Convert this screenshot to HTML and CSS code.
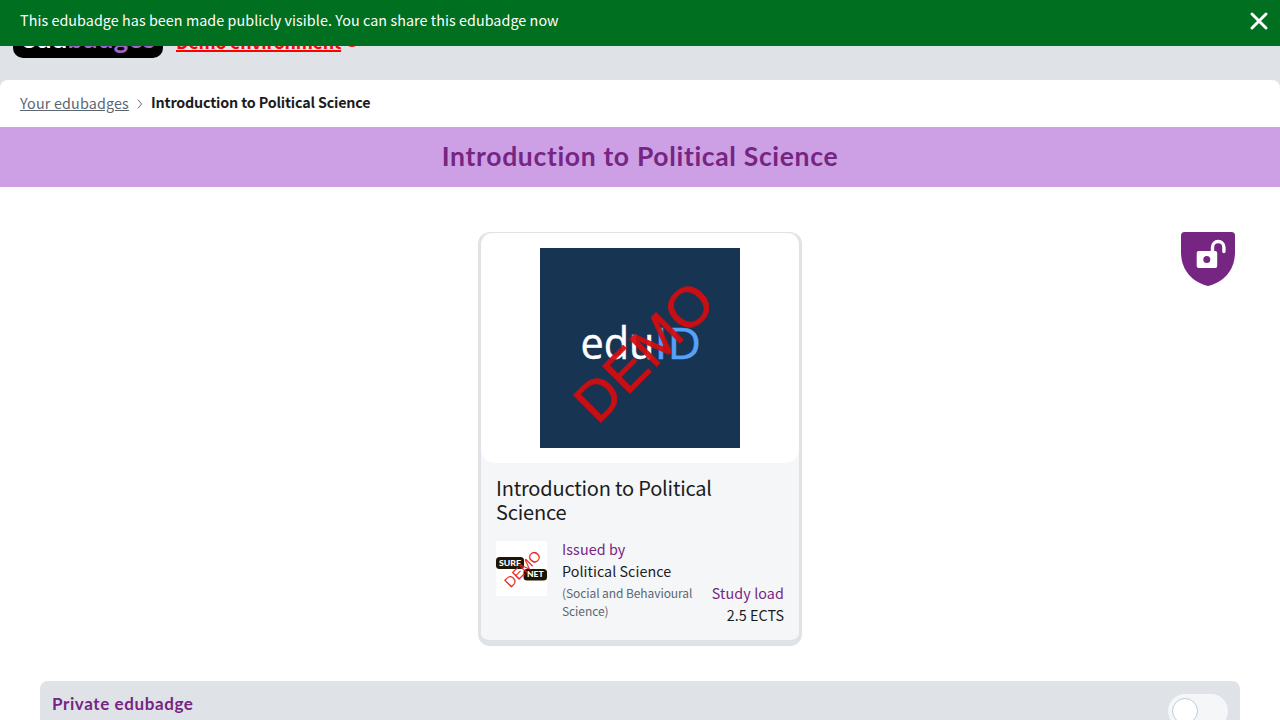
FILE: index.html
```html
<!DOCTYPE html>
<html lang="en">
<head>
<meta charset="utf-8">
<title>Introduction to Political Science</title>
<link rel="stylesheet" href="styles.css">
</head>
<body>
<div class="toast">
  <span>This edubadge has been made publicly visible. You can share this edubadge now</span>
  <svg class="close" viewBox="0 0 18 18" width="18" height="18"><path d="M2 2L16 16M16 2L2 16" fill="none" stroke="#fff" stroke-width="2.900" stroke-linecap="round"/></svg>
</div>
<header class="header">
  <div class="logo">edu<span class="logo-accent">badges</span></div>
  <a class="demo">Demo environment</a>
  <svg class="info" viewBox="0 0 14 14" width="14" height="14"><circle cx="7" cy="7" r="7" fill="#f00"/></svg>
</header>
<main class="page">
  <nav class="crumbs">
    <a class="crumb">Your edubadges</a>
    <svg class="chevron" viewBox="0 0 6 10" width="6" height="10"><path d="M1 .7L4.600 5L1 9.300" fill="none" stroke="#606a74" stroke-width="1"/></svg>
    <span class="current">Introduction to Political Science</span>
  </nav>
  <div class="band"><h1>Introduction to Political Science</h1></div>
  <section class="stage">
    <article class="card">
      <div class="picture">
        <svg viewBox="0 0 200 200" width="200" height="200">
          <rect width="200" height="200" fill="#183453"/>
          <text class="eduid" x="40.500" y="111" textLength="74" lengthAdjust="spacingAndGlyphs" fill="#fff" stroke="#fff" stroke-width=".4">edu</text>
          <text class="eduid" x="114.500" y="111" textLength="46.500" lengthAdjust="spacingAndGlyphs" fill="#56a2fb" stroke="#56a2fb" stroke-width=".4">ID</text>
          <text class="stamp" transform="translate(57.500 177.500) rotate(-45)" textLength="170" font-size="56" fill="#d30d11" stroke="#d30d11" stroke-width=".9" opacity=".94">DEMO</text>
        </svg>
      </div>
      <div class="details">
        <h2>Introduction to Political Science</h2>
        <div class="meta">
          <svg class="issuer-logo" viewBox="0 0 51 55" width="51" height="55">
            <rect width="51" height="55" fill="#fff"/>
            <rect y="16" width="28" height="12" rx="3.500" fill="#1d1605"/>
            <rect x="27.500" y="28" width="23.500" height="11.500" rx="3.500" fill="#1d1605"/>
            <text class="pill" x="3" y="24.500" textLength="22" lengthAdjust="spacingAndGlyphs">SURF</text>
            <text class="pill" x="31" y="36.200" textLength="16.500" lengthAdjust="spacingAndGlyphs">NET</text>
            <text class="stamp" transform="translate(14.500 47.500) rotate(-45)" textLength="45" font-size="15" fill="#e51b20" fill-opacity=".95">DEMO</text>
          </svg>
          <div class="issuer">
            <div class="label">Issued by</div>
            <div class="value">Political Science</div>
            <div class="faculty">(Social and Behavioural Science)</div>
          </div>
          <div class="load">
            <div class="label">Study load</div>
            <div class="value">2.5 ECTS</div>
          </div>
        </div>
      </div>
    </article>
    <svg class="shield" viewBox="0 0 54 54" width="54" height="54">
      <path d="M3.500 0H50.500Q54 0 54 3.500V20C54 38 43 50 27 54C11 50 0 38 0 20V3.500Q0 0 3.500 0Z" fill="#772583"/>
      <rect x="15.700" y="19" width="20.500" height="17" rx="2" fill="#fff"/>
      <circle cx="25.800" cy="27.500" r="3.500" fill="#772583"/>
      <path d="M31.500 20V15.200A5.700 5.700 0 0 1 42.900 15.200V19.500" fill="none" stroke="#fff" stroke-width="3.400" stroke-linecap="round"/>
    </svg>
  </section>
  <section class="privacy">
    <h3>Private edubadge</h3>
    <div class="switch"><div class="knob"></div></div>
  </section>
</main>
</body>
</html>
```
FILE: styles.css
```css
* { box-sizing: border-box; }
body {
  margin: 0;
  height: 720px;
  overflow: hidden;
  background: #dfe2e7;
  color: #1c1c1e;
  font-family: "Noto Sans CJK SC", "Noto Sans", sans-serif;
  font-size: 14.32px;
  line-height: 22px;
}
h1, h2, h3 { margin: 0; }
.toast {
  position: fixed;
  top: 0;
  left: 0;
  width: 100%;
  height: 46px;
  padding: 0 12px 4px 20px;
  display: flex;
  align-items: center;
  justify-content: space-between;
  background: #006f20;
  color: #fff;
}
.toast span { padding-bottom: 2px; letter-spacing: .065px; }
.header {
  height: 80px;
  padding: 14px 13px 0;
  display: flex;
  align-items: flex-start;
}
.logo {
  width: 150px;
  height: 44px;
  border-radius: 10px;
  background: #000;
  color: #fff;
  text-align: center;
  font: bold 28px/46px Lato, sans-serif;
}
.logo-accent { color: #a864c4; }
.demo {
  margin: 16px 0 0 13px;
  color: #f00;
  font-size: 17.9px;
  font-weight: bold;
  letter-spacing: -.32px;
  text-decoration: underline 2px;
}
.info { margin: 19px 0 0 4px; }
.page {
  height: 640px;
  border-radius: 8px 8px 0 0;
  background: #fff;
  overflow: hidden;
}
.crumbs {
  height: 47px;
  padding: 0 20px;
  display: flex;
  align-items: center;
}
.crumb {
  padding-bottom: 1px;
  color: #5c6670;
  letter-spacing: .17px;
  text-decoration: underline;
}
.chevron { margin: 1px 8px 0; }
.current { font-weight: bold; letter-spacing: -.17px; padding-bottom: 3px; }
.band {
  height: 60px;
  background: #cda0e5;
  color: #772583;
  text-align: center;
}
.band h1 { font: bold 26.5px/59px Lato, sans-serif; letter-spacing: .67px; font-variant-ligatures: none; }
.stage {
  height: 494px;
  padding: 45px 45px 0;
  display: grid;
  grid-template-columns: 1fr 324px 1fr;
  align-items: start;
}
.card {
  grid-column: 2;
  height: 414px;
  border: solid #dfe2e7;
  border-width: 1px 3px 6px;
  border-radius: 12px;
  background: #f4f6f8;
}
.picture {
  height: 230px;
  padding-top: 15px;
  border-radius: 14px;
  background: #fff;
  text-align: center;
}
.picture svg { display: block; margin: 0 auto; }
.eduid { font-family: "Open Sans", sans-serif; font-size: 44px; }
.stamp { font-family: "Liberation Sans", sans-serif; }
.pill { font: 900 7.5px Lato, sans-serif; fill: #fff; }
.details { padding: 13px 15px; }
.details h2 { font-size: 20px; font-weight: 400; line-height: 24px; letter-spacing: -.2px; }
.meta { display: flex; margin-top: 17px; }
.issuer-logo { flex: none; }
.issuer { width: 140px; margin: -3px 0 0 15px; }
.label { color: #772583; letter-spacing: .1px; }
.value { letter-spacing: .04px; }
.faculty {
  padding-top: 2px;
  color: #5c6670;
  font-size: 12px;
  line-height: 18px;
  letter-spacing: -.08px;
}
.load { flex: 1; margin-top: 41px; text-align: right; white-space: nowrap; }
.shield { grid-column: 3; justify-self: end; }
.privacy {
  height: 90px;
  margin: 0 40px;
  padding: 13px 12px 0;
  display: flex;
  justify-content: space-between;
  border-radius: 8px;
  background: #dfe2e7;
}
.privacy h3 { color: #772583; font: bold 17px/20px Lato, sans-serif; letter-spacing: .6px; }
.switch {
  width: 60px;
  height: 34px;
  padding: 4px;
  border-radius: 17px;
  background: #f4f6f8;
}
.knob {
  width: 26px;
  height: 26px;
  border: 1px solid #c3ccd6;
  border-radius: 50%;
  background: #fff;
}
```
